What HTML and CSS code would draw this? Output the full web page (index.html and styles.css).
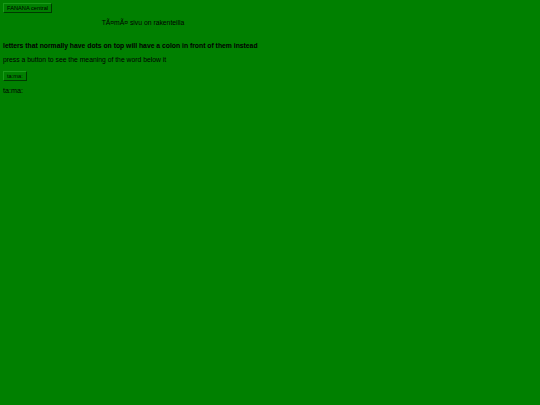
FILE: index.html
```html
<!DOCTYPE html>
<html>
<head>
<meta charset="utf-8">
<link rel="stylesheet" href="styles.css">
</head>
<body>
<div class="top">
  <button class="btn">FANANA central</button>
</div>
<p class="notice">TÃ¤mÃ¤ sivu on rakenteilla</p>
<p class="bold">letters that normally have dots on top will have a colon in front of them instead</p>
<p class="info">press a button to see the meaning of the word below it</p>
<div class="word-row">
  <button class="btn">ta:ma:</button>
</div>
<p class="word">ta:ma:</p>
</body>
</html>
```

FILE: styles.css
```css
html, body {
  background: #008000;
}
body {
  margin: 3px;
  font-family: "Liberation Sans", Arial, sans-serif;
  font-size: 6.8px;
  color: #000;
}
.top, .word-row {
  display: flex;
}
.btn {
  font-family: "Liberation Sans", Arial, sans-serif;
  font-size: 5.7px;
  color: #000;
  background: #008000;
  border: 1px solid #003a00;
  border-top-color: #1a9a1a;
  border-left-color: #1a9a1a;
  padding: 1px 3px;
  height: 10px;
  line-height: 6px;
  margin: 0;
}
.notice {
  margin: 6px 0 0 97px;
  width: 86px;
  text-align: center;
}
.bold {
  font-weight: bold;
  margin: 15px 0 0 0;
}
.info {
  margin: 6px 0 0 0;
}
.word-row {
  margin-top: 7px;
}
.word {
  margin: 6px 0 0 0;
  font-size: 7.2px;
}
p {
  line-height: 8px;
}
```
